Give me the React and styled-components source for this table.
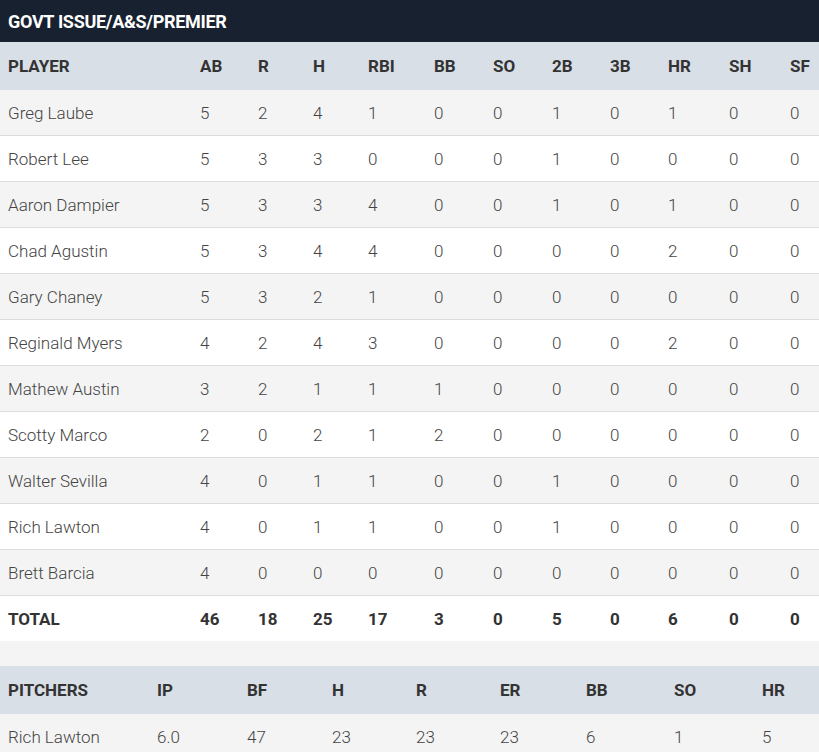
import React from "react";
import styled, { createGlobalStyle } from "styled-components";

const Global = createGlobalStyle`
  html, body { margin: 0; padding: 0; background: #f4f4f4; }
  body { font-family: Roboto, "Noto Sans", sans-serif; color: #333; }
`;

const Page = styled.div`
  width: 819px;
  display: flex;
  flex-direction: column;
`;

const TitleBar = styled.div`
  height: 42px;
  background: #18212f;
  color: #fff;
  font-weight: 700;
  font-size: 18px;
  letter-spacing: -0.3px;
  display: flex;
  align-items: center;
  padding-left: 8px;
`;

const Row = styled.div`
  display: grid;
  grid-template-columns: ${(p) => p.$cols};
  align-items: center;
  height: ${(p) => (p.$head ? "48px" : "45px")};
  background: ${(p) => (p.$head ? "#d8dfe6" : p.$alt ? "#f4f4f4" : "#fff")};
  border-top: ${(p) => (p.$line ? "1px solid #dcdcdc" : "none")};
  font-size: 17px;
  font-weight: ${(p) => (p.$head || p.$bold ? 700 : 300)};
  color: ${(p) => (p.$head || p.$bold ? "#333" : "#444")};
`;

const Cell = styled.div`
  padding-left: 8px;
  white-space: nowrap;
`;

const Gap = styled.div`
  height: 25px;
  background: #f4f4f4;
`;

const BAT_COLS = "192px 58px 55px 55px 66px 59px 59px 58px 58px 61px 61px 37px";
const PIT_COLS = "149px 90px 85px 84px 84px 86px 88px 88px 65px";

const batHead = ["PLAYER", "AB", "R", "H", "RBI", "BB", "SO", "2B", "3B", "HR", "SH", "SF"];
const batters = [
  ["Greg Laube", 5, 2, 4, 1, 0, 0, 1, 0, 1, 0, 0],
  ["Robert Lee", 5, 3, 3, 0, 0, 0, 1, 0, 0, 0, 0],
  ["Aaron Dampier", 5, 3, 3, 4, 0, 0, 1, 0, 1, 0, 0],
  ["Chad Agustin", 5, 3, 4, 4, 0, 0, 0, 0, 2, 0, 0],
  ["Gary Chaney", 5, 3, 2, 1, 0, 0, 0, 0, 0, 0, 0],
  ["Reginald Myers", 4, 2, 4, 3, 0, 0, 0, 0, 2, 0, 0],
  ["Mathew Austin", 3, 2, 1, 1, 1, 0, 0, 0, 0, 0, 0],
  ["Scotty Marco", 2, 0, 2, 1, 2, 0, 0, 0, 0, 0, 0],
  ["Walter Sevilla", 4, 0, 1, 1, 0, 0, 1, 0, 0, 0, 0],
  ["Rich Lawton", 4, 0, 1, 1, 0, 0, 1, 0, 0, 0, 0],
  ["Brett Barcia", 4, 0, 0, 0, 0, 0, 0, 0, 0, 0, 0],
];
const total = ["TOTAL", 46, 18, 25, 17, 3, 0, 5, 0, 6, 0, 0];

const pitHead = ["PITCHERS", "IP", "BF", "H", "R", "ER", "BB", "SO", "HR"];
const pitchers = [["Rich Lawton", "6.0", 47, 23, 23, 23, 6, 1, 5]];

export default function App() {
  return (
    <Page>
      <Global />
      <TitleBar>GOVT ISSUE/A&amp;S/PREMIER</TitleBar>
      <Row $head $cols={BAT_COLS}>
        {batHead.map((h) => (
          <Cell key={h}>{h}</Cell>
        ))}
      </Row>
      {batters.map((r, i) => (
        <Row key={r[0]} $cols={BAT_COLS} $alt={i % 2 === 0} $line={i > 0}>
          {r.map((v, j) => (
            <Cell key={j}>{v}</Cell>
          ))}
        </Row>
      ))}
      <Row $cols={BAT_COLS} $bold $line>
        {total.map((v, j) => (
          <Cell key={j}>{v}</Cell>
        ))}
      </Row>
      <Gap />
      <Row $head $cols={PIT_COLS}>
        {pitHead.map((h) => (
          <Cell key={h}>{h}</Cell>
        ))}
      </Row>
      {pitchers.map((r, i) => (
        <Row key={r[0]} $cols={PIT_COLS} $alt={i % 2 === 0}>
          {r.map((v, j) => (
            <Cell key={j}>{v}</Cell>
          ))}
        </Row>
      ))}
    </Page>
  );
}
